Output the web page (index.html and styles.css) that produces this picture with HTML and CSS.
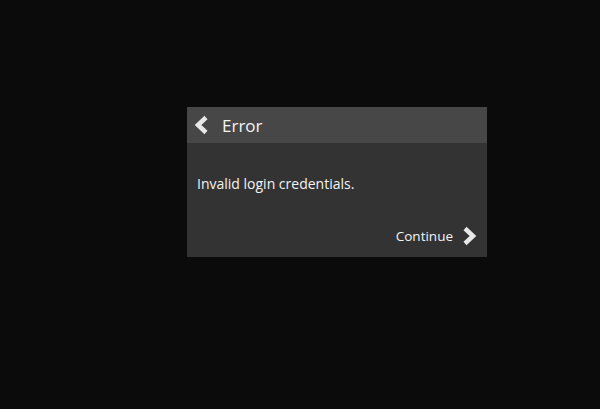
FILE: index.html
```html
<!DOCTYPE html>
<html lang="en">
<head>
    <meta charset="UTF-8">
    <meta name="viewport" content="width=device-width, initial-scale=1.0">
    <title>Error</title>
    <link rel="stylesheet" href="styles.css">
</head>
<body>
    <div class="dialog">
        <div class="dialog-header">
            <svg class="chevron" width="18" height="20" viewBox="0 0 18 20">
                <path d="M14 2.5 L6 10 L14 17.5" fill="none" stroke="#e8e8e8" stroke-width="4.5"/>
            </svg>
            <h2>Error</h2>
        </div>
        <div class="dialog-body">
            <p>Invalid login credentials.</p>
            <div class="dialog-actions">
                <button type="button" class="continue-btn">
                    Continue
                    <svg class="chevron" width="18" height="20" viewBox="0 0 18 20">
                        <path d="M4 2.5 L12 10 L4 17.5" fill="none" stroke="#e8e8e8" stroke-width="4.5"/>
                    </svg>
                </button>
            </div>
        </div>
    </div>
</body>
</html>
```

FILE: styles.css
```css
html, body {
    height: 100%;
}
body {
    margin: 0;
    background-color: #0b0b0b;
    font-family: "Open Sans", "Noto Sans", sans-serif;
    color: #f4f4f4;
}
.dialog {
    width: 300px;
    margin: 107px 0 0 187px;
    background-color: #333333;
}
.dialog-header {
    display: flex;
    align-items: center;
    height: 36px;
    padding-left: 5px;
    background-color: #474747;
}
.dialog-header h2 {
    margin: 0 0 0 12px;
    font-size: 17px;
    font-weight: normal;
    color: #f4f4f4;
}
.dialog-body {
    padding: 31px 8px 11px 10px;
}
.dialog-body p {
    margin: 0;
    font-size: 14px;
}
.dialog-actions {
    display: flex;
    justify-content: flex-end;
    margin-top: 33px;
}
.continue-btn {
    display: flex;
    align-items: center;
    gap: 8px;
    padding: 0;
    border: none;
    background: none;
    color: #f4f4f4;
    font-family: inherit;
    font-size: 13.5px;
    cursor: pointer;
}
```
